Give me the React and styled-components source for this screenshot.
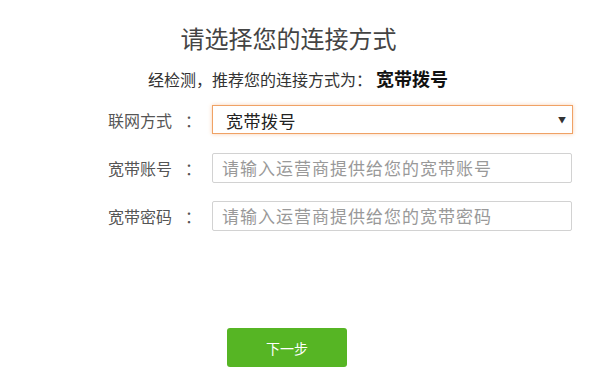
import React from 'react'
import styled, { createGlobalStyle } from 'styled-components'

const Global = createGlobalStyle`
  html, body {
    margin: 0;
    padding: 0;
    background: #fff;
  }
  body {
    font-family: "Noto Sans CJK SC", "Noto Sans", sans-serif;
    color: #333;
  }
`

const Wizard = () => {
  return (
    <>
      <Global />
      <Page>
        <Title>请选择您的连接方式</Title>
        <Hint>
          经检测，推荐您的连接方式为：<strong>宽带拨号</strong>
        </Hint>
        <Form>
          <Row>
            <Label>联网方式<Colon>：</Colon></Label>
            <SelectBox>
              <span>宽带拨号</span>
              <Arrow>▼</Arrow>
            </SelectBox>
          </Row>
          <Row>
            <Label>宽带账号<Colon>：</Colon></Label>
            <Field type="text" placeholder="请输入运营商提供给您的宽带账号" />
          </Row>
          <Row>
            <Label>宽带密码<Colon>：</Colon></Label>
            <Field type="text" placeholder="请输入运营商提供给您的宽带密码" />
          </Row>
        </Form>
        <Footer>
          <NextBtn>下一步</NextBtn>
        </Footer>
      </Page>
    </>
  )
}

const Page = styled.div`
  width: 577px;
  height: 380px;
  padding-top: 22px;
  box-sizing: border-box;
  display: flex;
  flex-direction: column;
`
const Title = styled.h1`
  margin: 0;
  text-align: center;
  font-size: 24px;
  line-height: 32px;
  font-weight: normal;
  color: #444;
`
const Hint = styled.p`
  margin: 12px 0 0 148px;
  font-size: 16px;
  line-height: 24px;
  color: #333;
  strong {
    font-size: 18px;
    font-weight: bold;
    color: #111;
    margin-left: 4px;
  }
`
const Form = styled.div`
  margin: 14px 0 0 108px;
  display: flex;
  flex-direction: column;
  gap: 19px;
`
const Row = styled.div`
  display: flex;
  align-items: center;
  height: 29px;
`
const Label = styled.label`
  width: 104px;
  font-size: 16px;
  color: #555;
`
const Colon = styled.span`
  margin-left: 13px;
`
const SelectBox = styled.div`
  width: 361px;
  height: 29px;
  box-sizing: border-box;
  border: 1px solid #f0a265;
  box-shadow: 0 0 4px rgba(240, 150, 80, 0.45);
  display: flex;
  align-items: center;
  justify-content: space-between;
  padding: 0 6px 0 13px;
  font-size: 17px;
  color: #222;
  span {
    padding-top: 2px;
    letter-spacing: 0.5px;
  }
`
const Arrow = styled.i`
  font-style: normal;
  font-size: 8px;
  color: #333;
`
const Field = styled.input`
  width: 360px;
  height: 30px;
  box-sizing: border-box;
  border: 1px solid #d2d2d2;
  border-radius: 2px;
  padding: 0 9px;
  font-family: "Noto Sans CJK SC", sans-serif;
  font-size: 17px;
  letter-spacing: 1px;
  outline: none;
  &::placeholder {
    color: #999;
  }
`
const Footer = styled.div`
  margin-top: 98px;
  padding-right: 3px;
  display: flex;
  justify-content: center;
`
const NextBtn = styled.button`
  width: 120px;
  height: 39px;
  border: none;
  border-radius: 3px;
  background: #56b524;
  color: #fff;
  font-family: "Noto Sans CJK SC", sans-serif;
  font-size: 14px;
  cursor: pointer;
`

export default Wizard
